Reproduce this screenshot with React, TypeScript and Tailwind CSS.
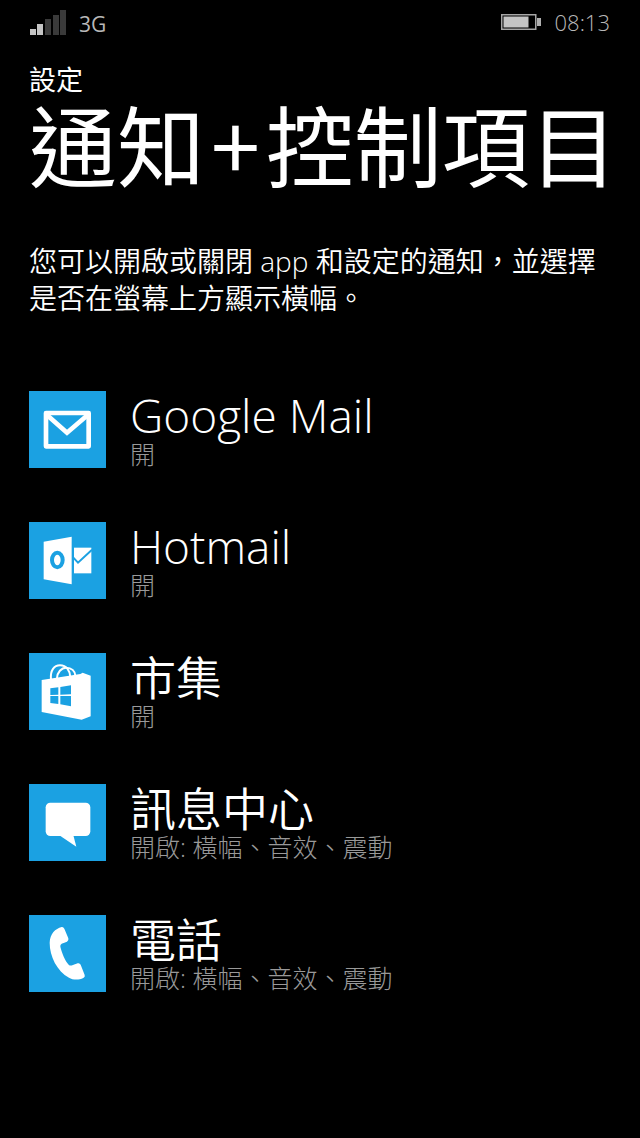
import type { ReactNode } from 'react';

type AppItem = {
  id: string;
  name: string;
  status: string;
  icon: ReactNode;
};

const items: AppItem[] = [
  { id: 'google-mail', name: 'Google Mail', status: '開', icon: <MailIcon /> },
  { id: 'hotmail', name: 'Hotmail', status: '開', icon: <OutlookIcon /> },
  { id: 'store', name: '市集', status: '開', icon: <StoreIcon /> },
  { id: 'messaging', name: '訊息中心', status: '開啟: 橫幅、音效、震動', icon: <ChatIcon /> },
  { id: 'phone', name: '電話', status: '開啟: 橫幅、音效、震動', icon: <PhoneIcon /> },
];

function MailIcon() {
  return (
    <svg viewBox="0 0 231 231" className="size-full" fill="none" stroke="#fff" strokeWidth="14" strokeLinejoin="round">
      <rect x="51" y="66" width="128" height="100" />
      <path d="M53 71 L114 125 L177 71" strokeLinejoin="miter" />
    </svg>
  );
}

function OutlookIcon() {
  return (
    <svg viewBox="0 0 231 231" className="size-full">
      <path d="M44 59 L128 44 V187 L44 172 Z" fill="#fff" />
      <ellipse cx="85" cy="114" rx="16" ry="22" fill="none" stroke="#1ba1e2" strokeWidth="12" />
      <rect x="135" y="77" width="52" height="77" fill="#fff" />
      <path d="M133 107 L147 122 L189 83" fill="none" stroke="#1ba1e2" strokeWidth="6" />
    </svg>
  );
}

function StoreIcon() {
  return (
    <svg viewBox="0 0 231 231" className="size-full">
      <g fill="none" stroke="#fff" strokeWidth="6">
        <path d="M66 80 C63 51 76 37 93 37 C113 37 123 54 124 72" />
        <path d="M84 76 C84 58 98 44 111 44 C128 44 138 54 139 68" />
      </g>
      <path d="M38 81 L154 63 L161 59 L185 68 V190 L158 200 L38 177 Z" fill="#fff" />
      <g fill="#1ba1e2">
        <path d="M64 106 L88 103 V125 L64 126 Z" />
        <path d="M94 102 L126 97 V124 L94 125 Z" />
        <path d="M64 129 H88 V153 L64 150 Z" />
        <path d="M94 129 H126 V160 L94 154 Z" />
      </g>
    </svg>
  );
}

function ChatIcon() {
  return (
    <svg viewBox="0 0 231 231" className="size-full" fill="#fff">
      <rect x="50" y="56" width="134" height="100" rx="14" />
      <path d="M91 154 L142 188 L133 154 Z" />
    </svg>
  );
}

function PhoneIcon() {
  return (
    <svg viewBox="0 0 231 231" className="size-full" fill="#fff">
      <path d="M98 36 Q103 35 106 41 L118 70 Q120 76 114 80 L98 86 Q93 89 94 95 C99 115 108 137 119 149 Q123 153 130 151 L146 145 Q152 143 155 149 L167 180 Q169 186 163 189 C149 196 131 195 120 188 C84 168 62 124 62 83 C63 56 79 41 98 36 Z" />
    </svg>
  );
}

function SignalIcon() {
  return (
    <svg viewBox="0 0 38 25" className="h-[25px] w-[38px]" role="img" aria-label="signal">
      <g fill="#c4c4c4">
        <rect x="1" y="19" width="6" height="6" />
        <rect x="8" y="14" width="6" height="11" />
      </g>
      <g fill="#3a3a3a">
        <rect x="16" y="9" width="6" height="16" />
        <rect x="24" y="5" width="6" height="20" />
        <rect x="31" y="0" width="6" height="25" />
      </g>
    </svg>
  );
}

function BatteryIcon() {
  return (
    <svg viewBox="0 0 40 16" className="h-4 w-10" role="img" aria-label="battery">
      <rect x="0.75" y="0.75" width="34" height="14.5" fill="none" stroke="#a6a6a6" strokeWidth="1.5" />
      <rect x="2.5" y="2.5" width="25" height="11" fill="#c4c4c4" />
      <rect x="36" y="4" width="4" height="8" fill="#b0b0b0" />
    </svg>
  );
}

function StatusBar() {
  return (
    <div className="flex h-11 items-center justify-between text-[#b8b8b8]">
      <div className="flex items-center gap-3">
        <SignalIcon />
        <span className="pt-1 text-[21px] leading-6 font-medium">3G</span>
      </div>
      <div className="flex items-center gap-3.5">
        <BatteryIcon />
        <span className="text-[22px] leading-6 font-light">08:13</span>
      </div>
    </div>
  );
}

function AppRow({ item }: { item: AppItem }) {
  return (
    <li>
      <button type="button" className="flex w-full items-start gap-6 text-left">
        <span className="size-[77px] shrink-0 bg-[#1ba1e2]">{item.icon}</span>
        <span className="flex min-w-0 flex-col">
          <span className="text-[46px] leading-[49px] font-[350]">{item.name}</span>
          <span className="text-[25px] leading-7 font-light text-[#999999]">{item.status}</span>
        </span>
      </button>
    </li>
  );
}

export default function App() {
  return (
    <div
      lang="zh-TW"
      className="min-h-screen bg-black pr-[30px] pl-[29px] font-['Open_Sans','Noto_Sans_CJK_TC',sans-serif] text-white"
    >
      <StatusBar />
      <header className="pt-[18px]">
        <p className="text-[27px] leading-9 font-normal">設定</p>
        <h1 className="font-['Noto_Sans_CJK_TC',sans-serif] text-[88px] leading-[88px] font-normal whitespace-nowrap">
          通知<span className="mx-1.5">+</span>控制項目
        </h1>
      </header>
      <main>
        <p className="pt-[57px] text-[28px] leading-[37px] font-[350]">
          您可以開啟或關閉 app 和設定的通知，並選擇是否在螢幕上方顯示橫幅。
        </p>
        <ul className="flex flex-col gap-[54px] pt-[74px]">
          {items.map((item) => (
            <AppRow key={item.id} item={item} />
          ))}
        </ul>
      </main>
    </div>
  );
}
